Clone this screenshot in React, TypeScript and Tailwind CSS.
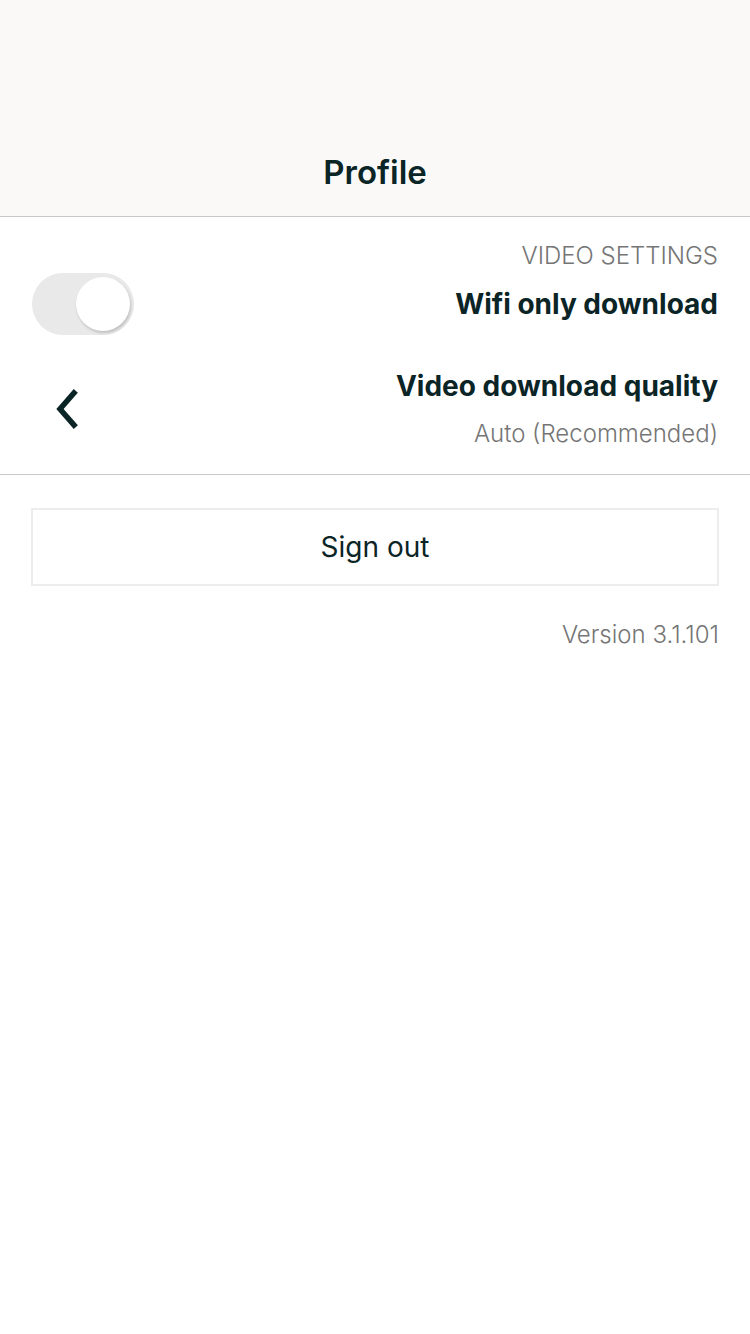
import React, { useState } from 'react';

const font = { fontFamily: 'Inter, "Noto Sans", sans-serif' };

const Toggle = ({ on, onChange }: { on: boolean; onChange: () => void }) => (
  <button
    onClick={onChange}
    className="relative h-[62px] w-[102px] shrink-0 rounded-full bg-[#e9e9e9]"
  >
    <span
      className={`absolute top-[4px] h-[54px] w-[54px] rounded-full bg-white shadow-[1px_2px_3px_rgba(0,0,0,0.18)] ${
        on ? 'left-[4px]' : 'left-[44px]'
      }`}
    />
  </button>
);

const App = () => {
  const [wifiOnly, setWifiOnly] = useState(false);

  return (
    <div className="min-h-[1334px] w-[750px] bg-white text-[#0b2426]" style={font}>
      <div className="flex h-[217px] items-end justify-center border-b border-[#c8c8c8] bg-[#faf9f7] pb-[24px]">
        <h1 className="text-[33px] font-semibold leading-[40px]">Profile</h1>
      </div>

      <div className="border-b border-[#c8c8c8] px-[32px] pb-[25px] pt-[24px]">
        <div className="text-right text-[24px] font-light leading-[30px] text-[#757575]">
          VIDEO SETTINGS
        </div>
        <div className="mt-[2px] flex items-center justify-between">
          <Toggle on={wifiOnly} onChange={() => setWifiOnly(!wifiOnly)} />
          <div className="text-[28px] font-bold leading-[34px]">Wifi only download</div>
        </div>

        <div className="mt-[34px] flex items-center justify-between">
          <svg width="34" height="44" viewBox="0 0 34 44" className="ml-[18px]">
            <path
              d="M24 6 L10 22 L24 38"
              fill="none"
              stroke="#0b2426"
              strokeWidth="5.5"
              strokeLinecap="square"
              strokeLinejoin="miter"
            />
          </svg>
          <div className="text-right">
            <div className="text-[28px] font-bold leading-[34px]">Video download quality</div>
            <div className="mt-[16px] text-[24px] font-light leading-[30px] text-[#757575]">
              Auto (Recommended)
            </div>
          </div>
        </div>
      </div>

      <div className="px-[31px] pt-[33px]">
        <button className="flex h-[78px] w-full items-center justify-center border-2 border-[#ededed] text-[28px] leading-[34px]">
          Sign out
        </button>
        <div className="mt-[34px] text-right text-[24px] font-light leading-[30px] text-[#757575]">
          Version 3.1.101
        </div>
      </div>
    </div>
  );
};

export default App;
